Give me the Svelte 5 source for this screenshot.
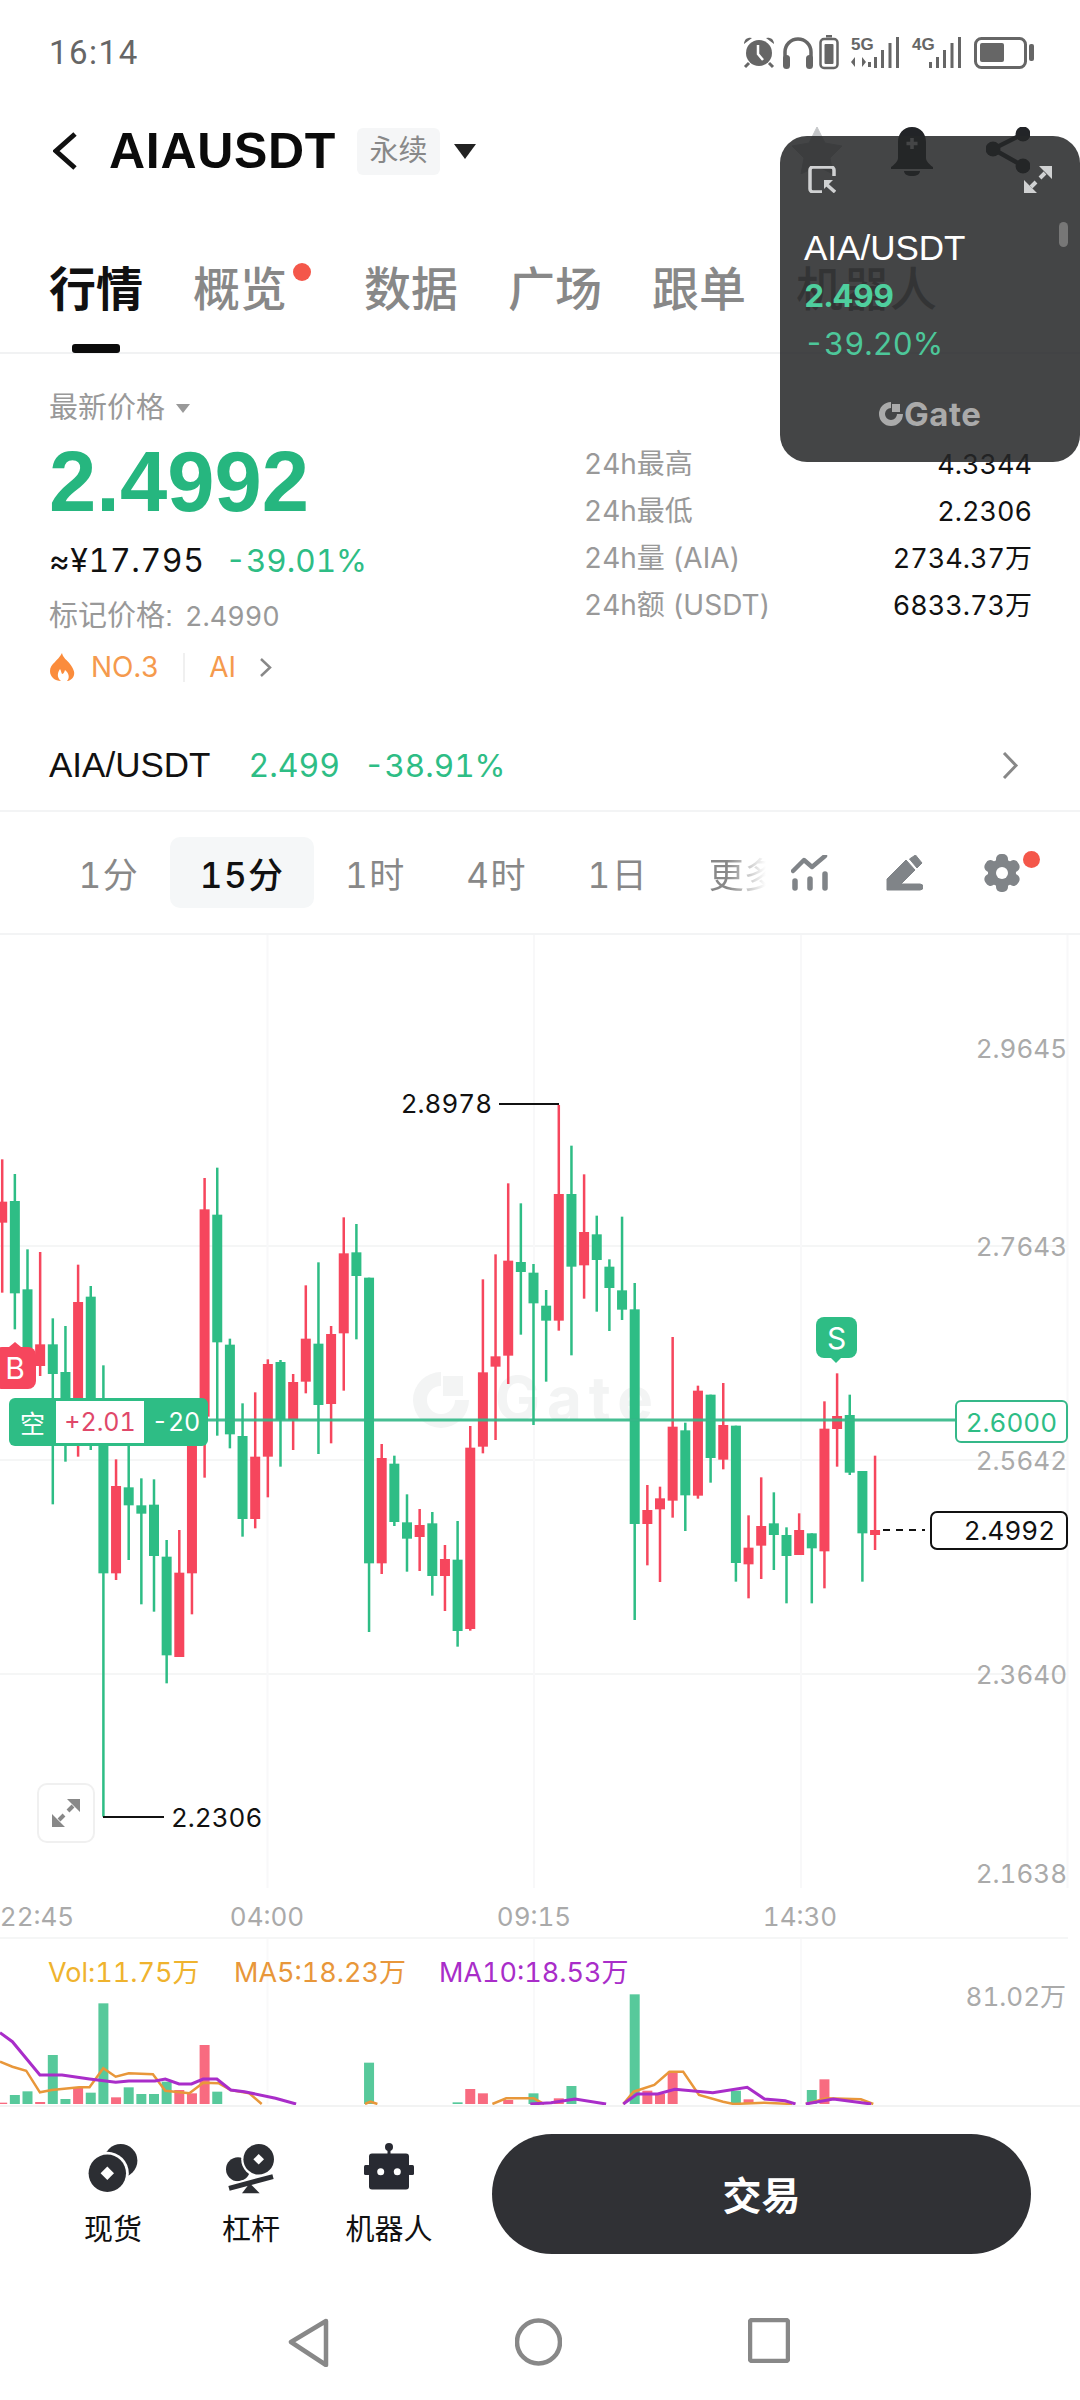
<script>
	const GREEN = '#2ebd85';
	const RED = '#f6465d';

	// g/r, wick top, body top, body bottom, wick bottom (chart zoom units, y = 1100 + v / 3)
	const raw = [
		['r', 178, 305, 368, 578], ['g', 222, 303, 580, 688], ['g', 448, 568, 780, 830], ['r', 456, 733, 798, 828],
		['g', 655, 733, 822, 1213], ['g', 678, 816, 960, 1085], ['r', 494, 606, 960, 1070], ['g', 558, 590, 960, 1050],
		['g', 796, 1000, 1420, 2150], ['r', 1078, 1158, 1420, 1440], ['g', 1000, 1162, 1216, 1380], ['g', 1135, 1216, 1241, 1513],
		['g', 1138, 1214, 1368, 1535], ['g', 1320, 1370, 1666, 1750], ['r', 1290, 1418, 1671, 1671], ['r', 1000, 1030, 1420, 1543],
		['r', 234, 328, 950, 1133], ['g', 203, 344, 727, 1007], ['g', 716, 734, 1003, 1045], ['g', 910, 1008, 1257, 1310],
		['r', 877, 1070, 1257, 1285], ['r', 778, 792, 1070, 1192], ['g', 780, 786, 960, 1100], ['r', 822, 846, 960, 1050],
		['r', 556, 716, 845, 880], ['g', 487, 731, 915, 1062], ['r', 678, 702, 912, 1030], ['r', 352, 460, 700, 872],
		['g', 372, 457, 528, 718], ['g', 533, 533, 1390, 1596], ['r', 1032, 1074, 1390, 1422], ['g', 1067, 1091, 1266, 1278],
		['g', 1183, 1267, 1316, 1415], ['r', 1227, 1275, 1311, 1413], ['g', 1236, 1270, 1428, 1487], ['r', 1335, 1377, 1428, 1533],
		['g', 1263, 1379, 1593, 1640], ['r', 978, 1043, 1587, 1592], ['r', 538, 817, 1040, 1060], ['r', 463, 769, 800, 1020],
		['r', 250, 482, 767, 852], ['g', 310, 486, 516, 704], ['g', 492, 518, 610, 975], ['g', 570, 617, 662, 845],
		['r', 15, 282, 662, 692], ['g', 137, 282, 500, 766], ['r', 223, 396, 496, 596], ['g', 347, 403, 480, 635],
		['g', 478, 500, 564, 693], ['g', 350, 571, 629, 660], ['g', 549, 628, 1272, 1560], ['r', 1155, 1230, 1272, 1396],
		['r', 1160, 1195, 1228, 1446], ['r', 711, 980, 1202, 1253], ['g', 968, 991, 1186, 1293], ['r', 857, 872, 1187, 1196],
		['g', 884, 884, 1074, 1148], ['r', 849, 975, 1079, 1108], ['g', 977, 977, 1389, 1445], ['r', 1246, 1343, 1393, 1495],
		['r', 1132, 1278, 1337, 1437], ['g', 1177, 1270, 1305, 1410], ['g', 1282, 1305, 1368, 1510], ['r', 1240, 1290, 1365, 1365],
		['g', 1300, 1300, 1345, 1510], ['r', 904, 986, 1354, 1465], ['r', 820, 948, 987, 1100], ['g', 884, 945, 1118, 1125],
		['g', 1113, 1113, 1300, 1445], ['r', 1067, 1290, 1305, 1350]
	];
	const cy = (v) => 1100 + v / 3;
	const cx = (i) => 2.2 + 12.65 * i;
	const candles = raw.map(([c, wt, bt, bb, wb], i) => ({
		x: cx(i),
		fill: c === 'g' ? GREEN : RED,
		wt: cy(wt),
		bt: cy(bt),
		h: (bb - bt) / 3,
		wb: cy(wb)
	}));

	// volume bars: candle index, colour, top (zoom units, y = 1880 + v / 3)
	const vy = (v) => 1880 + v / 3;
	const bars = [
		[0, 'r', 668], [1, 'g', 645], [2, 'g', 634], [3, 'r', 666], [4, 'g', 525], [5, 'g', 657], [6, 'r', 622],
		[7, 'g', 638], [8, 'g', 370], [9, 'r', 652], [10, 'g', 622], [11, 'g', 642], [12, 'g', 642], [13, 'g', 605],
		[14, 'r', 630], [15, 'r', 640], [16, 'r', 495], [17, 'g', 635], [29, 'g', 548], [36, 'g', 667], [37, 'r', 627],
		[38, 'r', 640], [40, 'r', 660], [42, 'g', 640], [44, 'r', 655], [45, 'g', 618], [50, 'g', 343], [51, 'r', 632],
		[52, 'r', 642], [53, 'r', 575], [58, 'g', 632], [59, 'r', 658], [64, 'g', 630], [65, 'r', 598]
	].map(([i, c, top]) => ({
		x: cx(i) - 5,
		y: vy(top),
		h: (672 - top) / 3,
		fill: c === 'g' ? '#57c99b' : '#f86b80'
	}));

	const toPoints = (pts) => pts.map(([x, y]) => `${(x / 1.452).toFixed(1)},${vy(y).toFixed(1)}`).join(' ');
	const ma5 = [
		[[0, 545], [18, 560], [38, 572], [58, 637], [75, 630], [115, 622], [130, 622], [150, 565], [168, 590], [187, 580], [222, 583], [240, 632], [275, 640], [295, 608], [318, 610], [335, 630], [362, 640], [380, 672]],
		[[530, 672], [538, 665], [548, 672]],
		[[715, 672], [735, 655], [775, 655], [790, 672]],
		[[905, 672], [920, 635], [950, 615], [972, 575], [992, 575], [1015, 645], [1050, 665], [1065, 672], [1110, 668], [1150, 672]],
		[[1170, 672], [1200, 655], [1250, 658], [1268, 672]]
	].map(toPoints);
	const ma10 = [
		[[0, 458], [18, 485], [58, 585], [90, 585], [130, 597], [168, 607], [187, 603], [225, 603], [240, 597], [260, 612], [278, 612], [295, 597], [315, 597], [335, 630], [355, 635], [400, 655], [430, 672]],
		[[770, 672], [800, 668], [835, 657], [880, 672]],
		[[905, 672], [925, 642], [955, 642], [980, 628], [1035, 638], [1085, 622], [1110, 657], [1140, 662], [1155, 672]],
		[[1170, 672], [1210, 657], [1265, 672]]
	].map(toPoints);

	const tabs = ['行情', '概览', '数据', '广场', '跟单', '机器人'];
	const intervals = ['1分', '15分', '1时', '4时', '1日'];
	const stats = [
		['24h最高', '4.3344'],
		['24h最低', '2.2306'],
		['24h量 (AIA)', '2734.37万'],
		['24h额 (USDT)', '6833.73万']
	];
	const axis = [['2.9645', 1048], ['2.7643', 1246], ['2.5642', 1460], ['2.3640', 1674], ['2.1638', 1873]];
	const times = [['22:45', 37], ['04:00', 267], ['09:15', 534], ['14:30', 800]];
</script>

<div class="page">
	<div class="status">
		<span class="clock">16:14</span>
		<svg width="296" height="45" viewBox="740 30 296 45">
			<g fill="#666">
				<circle cx="759" cy="53" r="13" />
				<path d="M744 44a6 6 0 0 1 8-6zM774 44a6 6 0 0 0-8-6z" />
				<path d="M749 63l-4 4M769 63l4 4" stroke="#666" stroke-width="3" />
				<path d="M758 45v9l5 6" fill="none" stroke="#fff" stroke-width="2.5" />
				<path d="M785 66V52a13 13 0 0 1 26 0v14" fill="none" stroke="#666" stroke-width="3.5" />
				<rect x="783" y="55" width="7" height="14" rx="3.5" />
				<rect x="806" y="55" width="7" height="14" rx="3.5" />
				<rect x="826" y="35" width="6" height="2.5" />
				<rect x="820.5" y="39" width="17" height="29" rx="3.5" fill="none" stroke="#666" stroke-width="2.5" />
				<rect x="824.5" y="44" width="9" height="20" rx="1" />
				<text x="851" y="50" class="net">5G</text>
				<path d="M851 62l4-5v10zM866 62l-4-5v10z" />
				<rect x="868" y="62" width="3" height="5" />
				<rect x="874" y="57" width="3" height="11" />
				<rect x="881" y="50" width="3" height="18" />
				<rect x="888.5" y="43" width="3" height="25" />
				<rect x="896" y="37" width="3" height="31" />
				<text x="912" y="50" class="net">4G</text>
				<rect x="929" y="62" width="3" height="6" />
				<rect x="936" y="57" width="3" height="11" />
				<rect x="943" y="50" width="3" height="18" />
				<rect x="950.5" y="43" width="3" height="25" />
				<rect x="958" y="37" width="3" height="31" />
				<rect x="975.5" y="38.5" width="50" height="29" rx="6" fill="none" stroke="#666" stroke-width="3" />
				<rect x="980" y="43" width="24" height="19" rx="2" />
				<rect x="1029" y="44" width="5" height="17" rx="2" />
			</g>
		</svg>
	</div>

	<div class="header">
		<svg class="back" width="24" height="38" viewBox="53 131 24 38">
			<path d="M75 133L56 150l19 17" fill="none" stroke="#111" stroke-width="5" />
		</svg>
		<span class="symbol">AIAUSDT</span>
		<span class="tag">永续</span>
		<span class="caret"></span>
		<div class="actions">
			<svg width="50" height="47" viewBox="792 126 50 47">
				<path d="M817 126l8 16 17 3-12 12 3 16-16-8-16 8 3-16-12-12 17-3z" fill="#c4c6c8" stroke="#c4c6c8" stroke-linejoin="round" />
			</svg>
			<svg width="42" height="49" viewBox="891 126 42 49">
				<path d="M912 126c-9 0-14 7-14 15v16c0 3-4 7-7 9v2h42v-2c-3-2-7-6-7-9v-16c0-8-5-15-14-15z" fill="#222427" />
				<path d="M904 170h16c0 3-3 5-8 5s-8-2-8-5z" fill="#222427" />
				<path d="M912 137v11M906.500 142.500h11" stroke="#fff" stroke-width="3.500" />
			</svg>
			<svg class="share" width="44" height="47" viewBox="986 126 44 47">
				<path d="M1023 133l-30 15 30 17" fill="none" stroke="#222427" stroke-width="4.500" />
				<circle cx="1023" cy="133" r="7.500" fill="#222427" />
				<circle cx="993" cy="148" r="7.500" fill="#222427" />
				<circle cx="1023" cy="165" r="7.500" fill="#222427" />
			</svg>
		</div>
	</div>

	<div class="tabs">
		{#each tabs as tab, i}
			<span class="tab" class:active={i === 0} class:dotted={i === 1}>{tab}</span>
		{/each}
		<i class="underline"></i>
	</div>

	<div class="quote">
		<div class="quote-left">
			<div class="muted last-label">最新价格<span class="mini-caret"></span></div>
			<div class="last-price">2.4992</div>
			<div class="fiat"><span class="approx">≈¥17.795</span><span class="up">-39.01%</span></div>
			<div class="muted mark"><span class="mark-label">标记价格:</span><span class="mark-value">2.4990</span></div>
			<div class="rank">
				<svg width="25" height="28" viewBox="0 0 25 28">
					<path d="M12 0c1 5 5 7 8 11 3 4 5 8 4 11-1 4-5 6-7 6 3-3 2-8-2-11-1 3-2 4-3 4-1-2-1-4-2-5-2 3-4 8 1 12-6 0-11-4-11-10 0-7 8-10 12-18z" fill="#fb8c3c" />
				</svg>
				<span class="no">NO.3</span>
				<i class="sep"></i>
				<span class="ai">AI</span>
				<svg width="13" height="19" viewBox="0 0 13 19">
					<path d="M2 1l9 8.500-9 8.500" fill="none" stroke="#888" stroke-width="2.500" />
				</svg>
			</div>
		</div>
		<div class="quote-right">
			{#each stats as [label, value]}
				<div class="stat"><span class="muted stat-label">{label}</span><span class="stat-value">{value}</span></div>
			{/each}
		</div>
	</div>

	<div class="spot-row">
		<span class="pair">AIA/USDT</span>
		<span class="up spot-price">2.499</span>
		<span class="up spot-change">-38.91%</span>
		<svg class="row-chevron" width="17" height="27" viewBox="0 0 17 27">
			<path d="M2 1l12 12.500L2 26" fill="none" stroke="#888" stroke-width="3" />
		</svg>
	</div>

	<div class="toolbar">
		<div class="intervals">
			{#each intervals as item, i}
				<span class="interval" class:current={i === 1}>{item}</span>
			{/each}
			<span class="interval more"><b>更多</b></span>
		</div>
		<div class="tools">
			<svg width="38" height="36" viewBox="792 856 38 36">
				<path d="M794 872l11-11 8 7 13-11" fill="none" stroke="#808488" stroke-width="4.500" stroke-linecap="round" stroke-linejoin="round" />
				<path d="M796 882v7M811 880v9M826 875v14" stroke="#808488" stroke-width="5.500" stroke-linecap="round" />
			</svg>
			<svg width="37" height="36" viewBox="887 856 37 36">
				<path d="M888 880l19-19 9 10-14 14h19a3 3 0 0 1 0 6h-33z" fill="#808488" stroke="#808488" stroke-linejoin="round" />
				<path d="M910.500 860l6-4 6.500 8-5 5z" fill="#808488" stroke="#808488" stroke-linejoin="round" />
			</svg>
			<span class="gear">
				<svg width="36" height="38" viewBox="984 854 36 38">
					<g fill="#808488">
						<circle cx="1002" cy="873" r="14" />
						<rect x="996" y="854" width="12" height="38" rx="5" />
						<rect x="996" y="854" width="12" height="38" rx="5" transform="rotate(60 1002 873)" />
						<rect x="996" y="854" width="12" height="38" rx="5" transform="rotate(120 1002 873)" />
					</g>
					<circle cx="1002" cy="873" r="6" fill="#fff" />
				</svg>
				<i class="gear-dot"></i>
			</span>
		</div>
	</div>

	<div class="chart">
		<svg width="1080" height="1170" viewBox="0 935 1080 1170">
			<g stroke="#f5f6f6" stroke-width="2">
				<path d="M0 1246H1068M0 1460H1068M0 1674H1068" />
				<path d="M267.500 935V1888M534 935V1888M801 935V1888M1067.500 935V1888" stroke="#f8f8f9" />
				<path d="M267.500 1938V2104M534 1938V2104M801 1938V2104" stroke="#f9f9fa" />
				<path d="M0 1938H1068" />
			</g>

			<g fill="#f3f4f4">
				<path d="M441 1372a28 28 0 1 0 28 28h-14a14 14 0 1 1-14-14z" />
				<rect x="443" y="1376" width="20" height="20" />
				<text x="495" y="1420" class="watermark">Gate</text>
			</g>

			{#each candles as c}
				<rect x={c.x - 1.25} y={c.wt} width="2.500" height={c.wb - c.wt} fill={c.fill} />
				<rect x={c.x - 5} y={c.bt} width="10" height={c.h} fill={c.fill} />
			{/each}

			<rect x="208" y="1418.500" width="750" height="3" fill="#35b889" opacity="0.92" />

			<path d="M499 1104H559" stroke="#111" stroke-width="2" fill="none" />
			<text x="492" y="1103" class="label black" text-anchor="end">2.8978</text>
			<path d="M103 1817H164" stroke="#111" stroke-width="2" fill="none" />
			<text x="171" y="1817" class="label black">2.2306</text>
			<path d="M883 1530H925" stroke="#111" stroke-width="2" stroke-dasharray="7 6" fill="none" />

			{#each axis as [text, y]}
				<text x="1067" {y} class="label grey" text-anchor="end">{text}</text>
			{/each}
			{#each times as [text, x]}
				<text {x} y="1916" class="label grey" text-anchor="middle">{text}</text>
			{/each}

			<text x="48" y="1972" class="ma" fill="#efb32e">Vol:11.75万</text>
			<text x="234" y="1972" class="ma" fill="#e8973a">MA5:18.23万</text>
			<text x="439" y="1972" class="ma" fill="#a92dc9">MA10:18.53万</text>
			<text x="1066" y="1996" class="label grey" text-anchor="end">81.02万</text>

			{#each bars as b}
				<rect x={b.x} y={b.y} width="10" height={b.h} fill={b.fill} />
			{/each}
			{#each ma5 as pts}
				<polyline points={pts} fill="none" stroke="#e8973a" stroke-width="2.500" />
			{/each}
			{#each ma10 as pts}
				<polyline points={pts} fill="none" stroke="#a92dc9" stroke-width="3" />
			{/each}
		</svg>

		<div class="mark-b">B</div>
		<div class="mark-s">S</div>
		<div class="position">
			<span class="pos-side">空</span>
			<span class="pos-pnl">+2.01</span>
			<span class="pos-qty">-20</span>
		</div>
		<div class="price-box order">2.6000</div>
		<div class="price-box now">2.4992</div>
		<div class="expand">
			<svg width="28" height="28" viewBox="0 0 28 28">
				<path d="M15 0h13v13zM0 15v13h13z" fill="#888" />
				<path d="M21 7l-5 5M12 16l-5 5" stroke="#888" stroke-width="4" />
			</svg>
		</div>
	</div>

	<div class="bottom">
		<div class="nav-item">
			<svg width="52" height="52" viewBox="88 2143 52 52">
				<circle cx="121.700" cy="2160.700" r="16.700" fill="#2c2e33" />
				<circle cx="108.300" cy="2173.300" r="21.500" fill="#fff" />
				<circle cx="108.300" cy="2173.300" r="18.700" fill="#2c2e33" />
				<path d="M108.300 2166.600l6.700 6.700-6.700 6.700-6.700-6.700z" fill="#fff" />
			</svg>
			<span>现货</span>
		</div>
		<div class="nav-item">
			<svg width="52" height="52" viewBox="227 2143 52 52">
				<circle cx="240" cy="2169.300" r="12" fill="#2c2e33" />
				<circle cx="260.700" cy="2159.300" r="17.500" fill="#fff" />
				<circle cx="260.700" cy="2159.300" r="15.300" fill="#2c2e33" />
				<path d="M260.700 2154l5.300 5.300-5.300 5.300-5.300-5.300z" fill="#fff" />
				<path d="M231 2188.300L275 2176.700" stroke="#fff" stroke-width="9" />
				<path d="M231 2188.300L275 2176.700" stroke="#2c2e33" stroke-width="5" />
				<path d="M251.700 2183.300l10 10H244z" fill="#2c2e33" />
			</svg>
			<span>杠杆</span>
		</div>
		<div class="nav-item">
			<svg width="52" height="52" viewBox="364 2142 52 52">
				<circle cx="390" cy="2146" r="4" fill="#282a32" />
				<rect x="388.500" y="2148" width="3" height="6" fill="#282a32" />
				<rect x="370" y="2152.500" width="40" height="36" rx="3" fill="#282a32" />
				<rect x="365" y="2164" width="6" height="10" rx="1.500" fill="#282a32" />
				<rect x="409" y="2164" width="6" height="10" rx="1.500" fill="#282a32" />
				<circle cx="381.700" cy="2170.700" r="3.500" fill="#fff" />
				<circle cx="398.300" cy="2170.700" r="3.500" fill="#fff" />
			</svg>
			<span>机器人</span>
		</div>
		<button class="trade">交易</button>
	</div>

	<div class="android">
		<svg width="41" height="49" viewBox="288 2318 41 49">
			<path d="M326 2321L291 2342l35 23z" fill="none" stroke="#888" stroke-width="4.500" stroke-linejoin="round" />
		</svg>
		<svg width="47" height="48" viewBox="516 2318 47 48">
			<circle cx="539.500" cy="2342" r="21.500" fill="none" stroke="#888" stroke-width="4.500" />
		</svg>
		<svg width="42" height="45" viewBox="748 2319 42 45">
			<rect x="750" y="2321" width="38" height="41" rx="2" fill="none" stroke="#888" stroke-width="4.500" />
		</svg>
	</div>

	<div class="float">
		<div class="float-icons">
			<svg width="28" height="27" viewBox="0 0 28 27">
				<path d="M26 10V4a3 3 0 0 0-3-3H5a3 3 0 0 0-3 3v19a3 3 0 0 0 3 3h9" fill="none" stroke="#d0d1d2" stroke-width="3.500" />
				<path d="M18 18l9 8" stroke="#d0d1d2" stroke-width="3.500" />
				<path d="M16 14h9l-9 9z" fill="#d0d1d2" />
			</svg>
			<svg width="28" height="27" viewBox="0 0 28 27">
				<path d="M15 0h13v13zM0 14v13h13z" fill="#d0d1d2" />
				<path d="M21 7l-5 5M12 16l-5 5" stroke="#d0d1d2" stroke-width="4" />
			</svg>
		</div>
		<i class="float-scroll"></i>
		<div class="float-pair">AIA/USDT</div>
		<div class="float-price">2.499</div>
		<div class="float-change">-39.20%</div>
		<div class="float-logo">
			<svg width="24" height="24" viewBox="0 0 24 24">
				<path d="M12 0a12 12 0 1 0 12 12h-6a6 6 0 1 1-6-6z" fill="#aaa" />
				<rect x="13" y="2" width="8" height="8" fill="#aaa" />
			</svg>
			<span>Gate</span>
		</div>
	</div>
</div>

<style>
	:global(body) {
		background: #fff;
	}

	.page {
		--sans: 'Liberation Sans', 'Noto Sans CJK SC', sans-serif;
		--num: Inter, 'Noto Sans CJK SC', sans-serif;
		position: relative;
		width: 1080px;
		height: 2400px;
		overflow: hidden;
		background: #fff;
		font-family: var(--num);
		font-variant-numeric: tabular-nums;
		color: #111;
	}

	.net {
		font: 700 17px 'Liberation Sans', sans-serif;
	}

	.status {
		display: flex;
		align-items: center;
		justify-content: space-between;
		height: 104px;
		padding: 0 44px 0 49px;
		box-sizing: border-box;
	}

	.clock {
		font: 400 33px Roboto, sans-serif;
		letter-spacing: 1.5px;
		color: #666;
	}

	.header {
		display: flex;
		align-items: center;
		height: 94px;
		padding: 0 50px 0 53px;
		box-sizing: border-box;
	}

	.symbol {
		margin-left: 32px;
		font: 700 50px var(--sans);
		letter-spacing: 0.7px;
		color: #0b0b0b;
	}

	.tag {
		margin-left: 21px;
		width: 83px;
		height: 47px;
		border-radius: 6px;
		background: #f5f6f7;
		font: 400 29px/47px var(--sans);
		text-align: center;
		color: #888;
	}

	.caret {
		margin-left: 14px;
		border-left: 11px solid transparent;
		border-right: 11px solid transparent;
		border-top: 15px solid #222;
	}

	.actions {
		display: flex;
		gap: 49px;
		margin-left: auto;
	}

	.share {
		margin-left: 4px;
	}

	.tabs {
		position: relative;
		display: flex;
		gap: 50px;
		height: 156px;
		padding: 67px 0 0 49px;
		box-sizing: border-box;
		border-bottom: 2px solid #f1f2f3;
		font: 500 47px/50px var(--sans);
		color: #888;
	}

	.tab.active {
		font-weight: 700;
		color: #111;
	}

	.tab.dotted {
		position: relative;
		margin-right: 27px;
	}

	.tab.dotted::after {
		content: '';
		position: absolute;
		top: -2px;
		right: -24px;
		width: 18px;
		height: 18px;
		border-radius: 50%;
		background: #f4574a;
	}

	.underline {
		position: absolute;
		left: 72px;
		bottom: -1px;
		width: 48px;
		height: 9px;
		border-radius: 3px;
		background: #0b0b0b;
	}

	.quote {
		display: flex;
		height: 366px;
		padding: 0 48px 0 49px;
	}

	.quote-left {
		width: 535px;
		flex: none;
	}

	.muted {
		color: #999;
	}

	.last-label {
		display: flex;
		align-items: center;
		padding-top: 36px;
		font: 400 29px/36px var(--sans);
		color: #999;
	}

	.mini-caret {
		margin-left: 11px;
		border-left: 7px solid transparent;
		border-right: 7px solid transparent;
		border-top: 9px solid #999;
	}

	.last-price {
		margin-top: 14px;
		font: 700 85px/84px var(--sans);
		color: #26b67f;
	}

	.fiat {
		display: flex;
		gap: 21px;
		margin-top: 17px;
		font-size: 31.500px;
		line-height: 40px;
	}

	.approx {
		font-size: 32px;
		letter-spacing: 0.6px;
	}

	.up {
		color: #2ebd85;
	}

	.mark {
		margin-top: 17px;
		font-size: 27px;
		line-height: 36px;
	}

	.mark-label {
		font: 400 29px/36px var(--sans);
	}

	.mark-value {
		margin-left: 12px;
	}

	.rank {
		display: flex;
		align-items: center;
		margin: 14px 0 0 1px;
		font-size: 28px;
		line-height: 36px;
		color: #f59a4d;
	}

	.no {
		margin-left: 16px;
	}

	.sep {
		width: 2px;
		height: 29px;
		margin: 0 24px;
		background: #f0f0f0;
	}

	.ai {
		margin-right: 23px;
	}

	.quote-right {
		flex: 1;
		padding-top: 87px;
	}

	.stat {
		display: flex;
		justify-content: space-between;
		font-size: 27px;
		line-height: 47px;
	}

	.stat-label {
		font-size: 28px;
	}

	.stat-value {
		color: #111;
	}

	.spot-row {
		display: flex;
		align-items: center;
		height: 92px;
		padding: 0 61px 0 49px;
		box-sizing: border-box;
		border-bottom: 2px solid #f3f4f5;
		font-size: 32px;
	}

	.pair {
		font: 400 35px var(--sans);
		color: #111;
	}

	.spot-price {
		margin: 0 24px 0 38px;
	}

	.spot-change {
		font-size: 31.500px;
	}

	.row-chevron {
		margin-left: auto;
	}

	.toolbar {
		display: flex;
		align-items: center;
		height: 123px;
		padding: 0 61px 0 49px;
		box-sizing: border-box;
		border-bottom: 2px solid #f3f4f5;
	}

	.intervals {
		display: flex;
		align-items: center;
		gap: 1.500px;
	}

	.interval {
		height: 71px;
		padding: 0 29.500px;
		border-radius: 10px;
		font-size: 35px;
		letter-spacing: 1.500px;
		line-height: 76px;
		white-space: nowrap;
		color: #888;
	}

	.interval.current {
		background: #f5f7f8;
		font-weight: 500;
		color: #111;
	}

	.interval.more {
		width: 60px;
		padding-right: 0;
		overflow: hidden;
		letter-spacing: 0;
	}

	.interval.more b {
		font-weight: 400;
		background: linear-gradient(90deg, #888 30%, #fff 95%);
		background-size: 60px 100%;
		background-repeat: no-repeat;
		-webkit-background-clip: text;
		background-clip: text;
		color: transparent;
	}

	.tools {
		display: flex;
		align-items: center;
		gap: 57px;
		margin-left: auto;
	}

	.gear {
		position: relative;
		display: flex;
		margin: 0 -1px 0 4px;
	}

	.gear-dot {
		position: absolute;
		top: -3px;
		right: -20px;
		width: 17px;
		height: 17px;
		border-radius: 50%;
		background: #f4574a;
	}

	.chart {
		position: relative;
		height: 1170px;
	}

	.chart svg {
		display: block;
	}

	.label {
		font: 400 26px Inter, 'Noto Sans CJK SC', sans-serif;
		font-variant-numeric: tabular-nums;
		dominant-baseline: central;
	}

	.black {
		fill: #111;
	}

	.grey {
		fill: #aaa;
	}

	.ma {
		font: 400 27px Inter, 'Noto Sans CJK SC', sans-serif;
		font-variant-numeric: tabular-nums;
		dominant-baseline: central;
	}

	.watermark {
		font: 700 60px Inter, sans-serif;
		letter-spacing: 7px;
	}

	.mark-b,
	.mark-s {
		position: absolute;
		display: flex;
		align-items: center;
		justify-content: center;
		border-radius: 8px;
		font-size: 30px;
		color: #fff;
	}

	.mark-b {
		left: -6px;
		top: 412px;
		width: 42px;
		height: 42px;
		background: #f6465d;
	}

	.mark-b::before {
		content: '';
		position: absolute;
		top: -5px;
		left: 15px;
		border-left: 6px solid transparent;
		border-right: 6px solid transparent;
		border-bottom: 5px solid #f6465d;
	}

	.mark-s {
		left: 816px;
		top: 382px;
		width: 41px;
		height: 41px;
		background: #2ebd85;
	}

	.mark-s::after {
		content: '';
		position: absolute;
		bottom: -5px;
		left: 15px;
		border-left: 5px solid transparent;
		border-right: 5px solid transparent;
		border-top: 5px solid #2ebd85;
	}

	.position {
		position: absolute;
		left: 9px;
		top: 463px;
		display: flex;
		align-items: center;
		width: 199px;
		height: 48px;
		box-sizing: border-box;
		border-radius: 6px;
		background: #2ebd85;
		font-size: 25px;
		color: #fff;
	}

	.pos-side {
		width: 47px;
		text-align: center;
	}

	.pos-pnl {
		width: 88px;
		height: 42px;
		background: #fff;
		line-height: 42px;
		text-align: center;
		color: #e0486a;
	}

	.pos-qty {
		flex: 1;
		text-align: center;
	}

	.price-box {
		position: absolute;
		left: 0;
		box-sizing: border-box;
		background: #fff;
		font-size: 26px;
		text-align: right;
	}

	.price-box.order {
		left: 955px;
		top: 465px;
		width: 113px;
		height: 43px;
		padding-right: 9px;
		border: 2.5px solid #35b889;
		border-radius: 6px;
		line-height: 41px;
		color: #2ebd85;
	}

	.price-box.now {
		left: 930px;
		top: 576px;
		width: 138px;
		height: 39px;
		padding-right: 11px;
		border: 2px solid #111;
		border-radius: 7px;
		line-height: 35px;
		color: #111;
	}

	.expand {
		position: absolute;
		left: 37px;
		top: 848px;
		display: flex;
		align-items: center;
		justify-content: center;
		width: 58px;
		height: 60px;
		box-sizing: border-box;
		border: 2px solid #f0f0f0;
		border-radius: 10px;
		background: #fff;
	}

	.bottom {
		display: flex;
		height: 185px;
		padding-left: 44px;
		box-sizing: border-box;
		border-top: 2px solid #f2f3f3;
	}

	.nav-item {
		display: flex;
		flex-direction: column;
		align-items: center;
		width: 138px;
		padding-top: 36px;
		box-sizing: border-box;
		font: 400 29px/36px var(--sans);
		color: #111;
	}

	.nav-item svg {
		display: block;
		margin-bottom: 17px;
	}

	.trade {
		width: 539px;
		height: 120px;
		margin: 27px 0 0 34px;
		padding-bottom: 3px;
		border: none;
		border-radius: 60px;
		background: #303135;
		font: 700 39px var(--sans);
		color: #fff;
	}

	.android {
		display: flex;
		align-items: flex-start;
		gap: 186px;
		padding: 28px 0 0 288px;
	}

	.float {
		position: absolute;
		left: 780px;
		top: 136px;
		width: 300px;
		height: 326px;
		padding: 30px 28px 0 24px;
		box-sizing: border-box;
		border-radius: 27px;
		background: rgba(37, 39, 40, 0.86);
	}

	.float-icons {
		display: flex;
		justify-content: space-between;
		padding-left: 4px;
	}

	.float-scroll {
		position: absolute;
		left: 279px;
		top: 86px;
		width: 9px;
		height: 25px;
		border-radius: 5px;
		background: #777;
	}

	.float-pair {
		margin-top: 35px;
		font: 400 35px/40px var(--sans);
		color: #fff;
	}

	.float-price {
		margin-top: 8px;
		font-size: 31.500px;
		font-weight: 700;
		line-height: 40px;
		color: #4fcf9e;
	}

	.float-change {
		margin-top: 8px;
		font-size: 31px;
		line-height: 40px;
		color: #4dc79a;
	}

	.float-logo {
		display: flex;
		align-items: center;
		margin: 38px 0 0 75px;
		font-size: 33px;
		font-weight: 700;
		letter-spacing: 0.5px;
		line-height: 24px;
		color: #aaa;
	}

	.float-logo span {
		margin-left: 1px;
	}
</style>
